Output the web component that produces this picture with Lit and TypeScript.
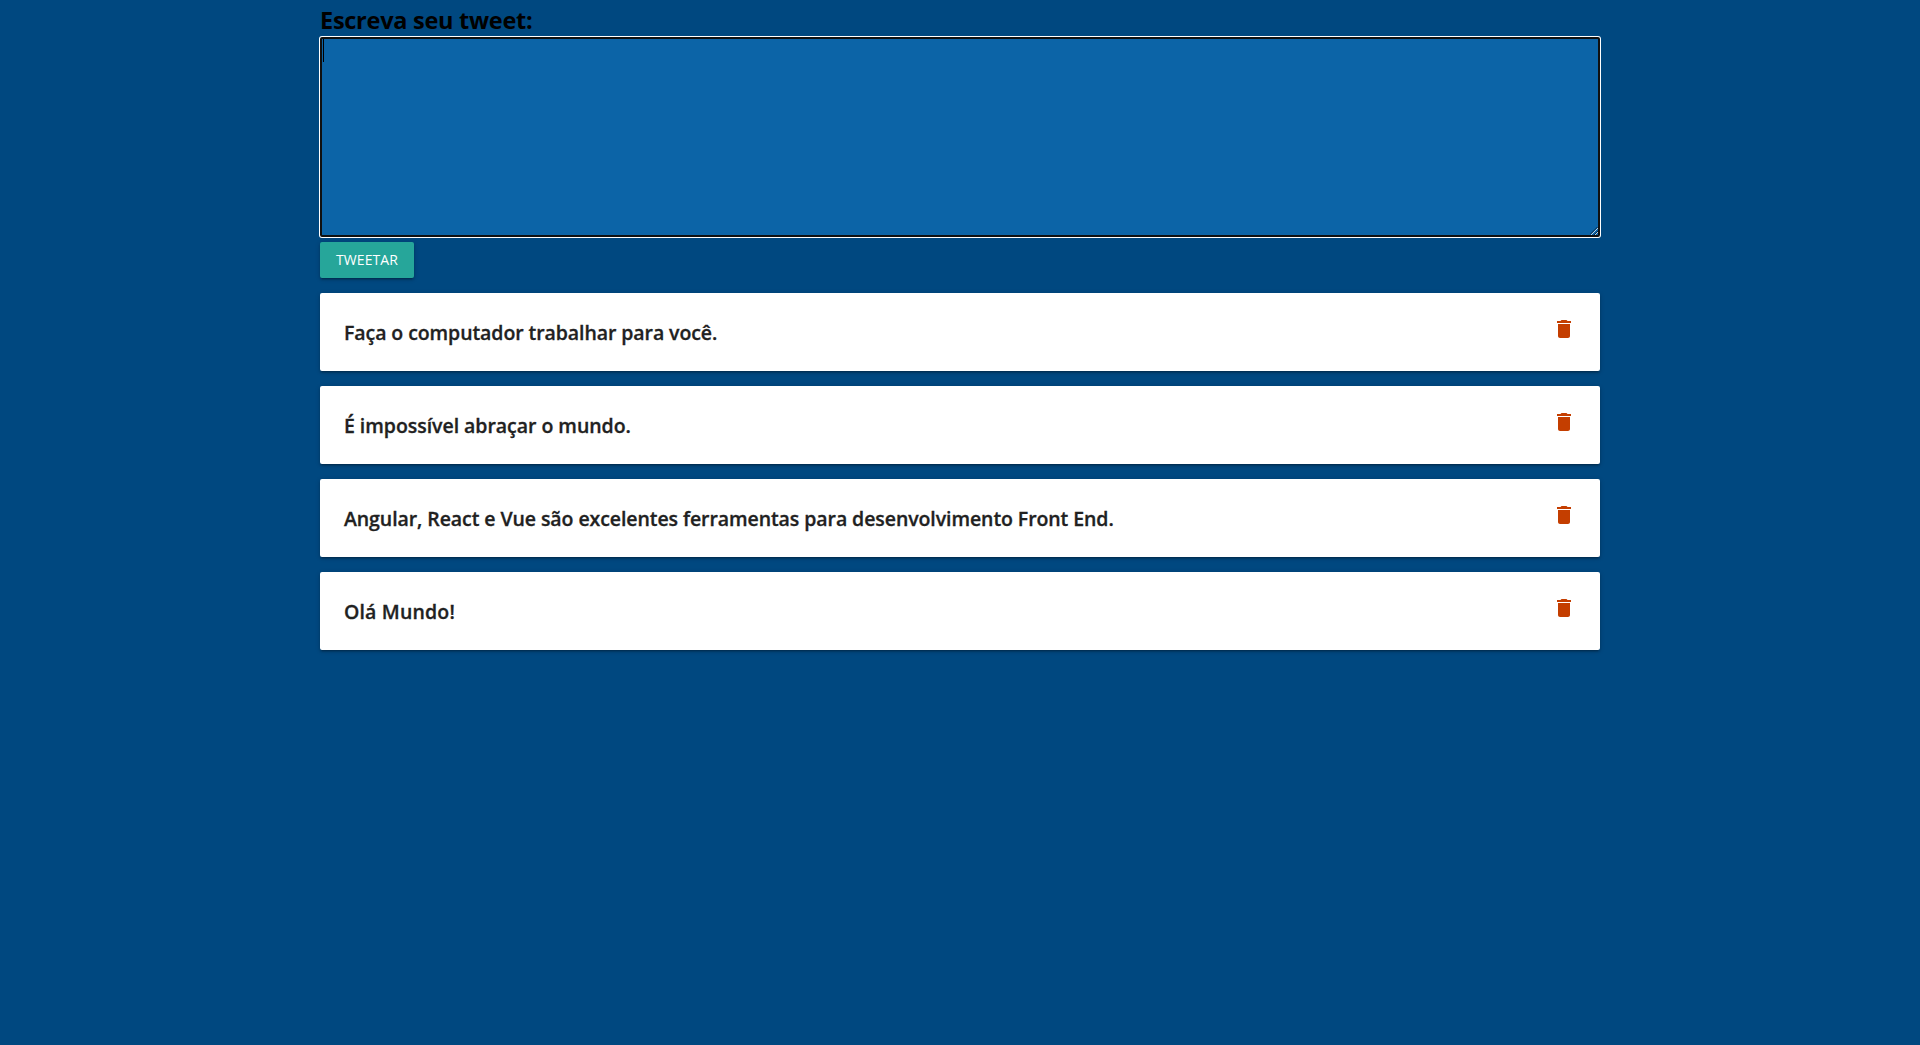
import { LitElement, html, css } from "lit";
import { customElement, property, state } from "lit/decorators.js";
import { styleMap } from "lit/directives/style-map.js";

interface Tweet {
  text: string;
  /** letter spacing in px */
  tracking: number;
}

@customElement("tweet-card")
export class TweetCard extends LitElement {
  static styles = css`
    :host {
      display: block;
    }
    .card {
      display: flex;
      justify-content: space-between;
      align-items: flex-start;
      height: 78px;
      padding: 24px;
      box-sizing: border-box;
      border-radius: 2px;
      background: #fff;
      box-shadow: 0 2px 2px 0 rgba(0, 0, 0, 0.14), 0 3px 1px -2px rgba(0, 0, 0, 0.12),
        0 1px 5px 0 rgba(0, 0, 0, 0.2);
    }
    .text {
      font-size: 19.5px;
      font-weight: 600;
      line-height: 32px;
      white-space: nowrap;
      color: #212121;
      -webkit-text-stroke: 0.3px #212121;
    }
    .remove {
      display: block;
      padding: 0;
      border: 0;
      background: none;
      cursor: pointer;
    }
    .icon {
      display: block;
      width: 24px;
      height: 24px;
      fill: #c43e00;
    }
  `;

  @property({ attribute: false }) tweet: Tweet = { text: "", tracking: 0 };

  private remove() {
    this.dispatchEvent(new CustomEvent("remove"));
  }

  render() {
    return html`
      <div class="card">
        <span class="text" style=${styleMap({ letterSpacing: `${this.tweet.tracking}px` })}
          >${this.tweet.text}</span
        >
        <button class="remove" @click=${this.remove}>
          <svg class="icon" viewBox="0 0 24 24">
            <path d="M6 19c0 1.1.9 2 2 2h8c1.1 0 2-.9 2-2V7H6v12zM19 4h-3.5l-1-1h-5l-1 1H5v2h14V4z" />
          </svg>
        </button>
      </div>
    `;
  }
}

@customElement("app-root")
export class AppRoot extends LitElement {
  static styles = css`
    :host {
      display: block;
      min-height: 100vh;
      background: #004880;
      font-family: "Open Sans", "Noto Sans", sans-serif;
    }
    .container {
      display: flex;
      flex-direction: column;
      align-items: stretch;
      width: 1280px;
      margin: 0 auto;
    }
    .label {
      height: 37px;
      padding-top: 4px;
      box-sizing: border-box;
      font-size: 23.5px;
      font-weight: 700;
      line-height: 32px;
      letter-spacing: -0.27px;
      color: #000;
    }
    .field {
      position: relative;
      height: 200px;
    }
    .input {
      display: block;
      width: 100%;
      height: 100%;
      margin: 0;
      padding: 2px;
      box-sizing: border-box;
      border: 2px solid #101010;
      border-radius: 2px;
      outline: none;
      box-shadow: 0 0 0 1px #fff;
      resize: none;
      background: #0c64a7;
      font: 400 18px/24px "Open Sans", sans-serif;
      color: #000;
    }
    .caret {
      position: absolute;
      left: 3px;
      top: 2px;
      width: 1px;
      height: 23px;
      background: #000;
    }
    .grip {
      position: absolute;
      right: 2px;
      bottom: 2px;
      width: 8px;
      height: 8px;
      fill: none;
      pointer-events: none;
    }
    .dark {
      stroke: #0a2a48;
    }
    .light {
      stroke: #b9d4e8;
    }
    .submit {
      align-self: flex-start;
      width: 94px;
      height: 36px;
      margin: 5px 0 15px;
      padding: 0;
      border: 0;
      border-radius: 2px;
      background: #26a69a;
      box-shadow: 0 2px 2px 0 rgba(0, 0, 0, 0.14), 0 3px 1px -2px rgba(0, 0, 0, 0.12),
        0 1px 5px 0 rgba(0, 0, 0, 0.2);
      font: 400 14px/36px "Open Sans", sans-serif;
      letter-spacing: 0.1px;
      text-transform: uppercase;
      color: #fff;
      cursor: pointer;
    }
    .list {
      display: flex;
      flex-direction: column;
      gap: 15px;
    }
  `;

  @state() private tweets: Tweet[] = [
    { text: "Faça o computador trabalhar para você.", tracking: -0.08 },
    { text: "É impossível abraçar o mundo.", tracking: -0.04 },
    {
      text: "Angular, React e Vue são excelentes ferramentas para desenvolvimento Front End.",
      tracking: -0.08,
    },
    { text: "Olá Mundo!", tracking: 0.16 },
  ];

  private removeTweet(tweet: Tweet) {
    this.tweets = this.tweets.filter((t) => t !== tweet);
  }

  private addTweet() {
    const input = this.renderRoot.querySelector("textarea");
    if (!input || !input.value.trim()) return;
    this.tweets = [{ text: input.value, tracking: -0.08 }, ...this.tweets];
    input.value = "";
  }

  render() {
    return html`
      <main class="container">
        <label class="label" for="tweet">Escreva seu tweet:</label>
        <div class="field">
          <textarea class="input" id="tweet"></textarea>
          <span class="caret"></span>
          <svg class="grip" viewBox="0 0 8 8">
            <path class="dark" d="M0 7.5L7.5 0M4 8L8 4" />
            <path class="light" d="M1 8L8 1M5 8L8 5" />
          </svg>
        </div>
        <button class="submit" @click=${this.addTweet}>Tweetar</button>
        <div class="list">
          ${this.tweets.map(
            (t) => html`<tweet-card .tweet=${t} @remove=${() => this.removeTweet(t)}></tweet-card>`
          )}
        </div>
      </main>
    `;
  }
}
